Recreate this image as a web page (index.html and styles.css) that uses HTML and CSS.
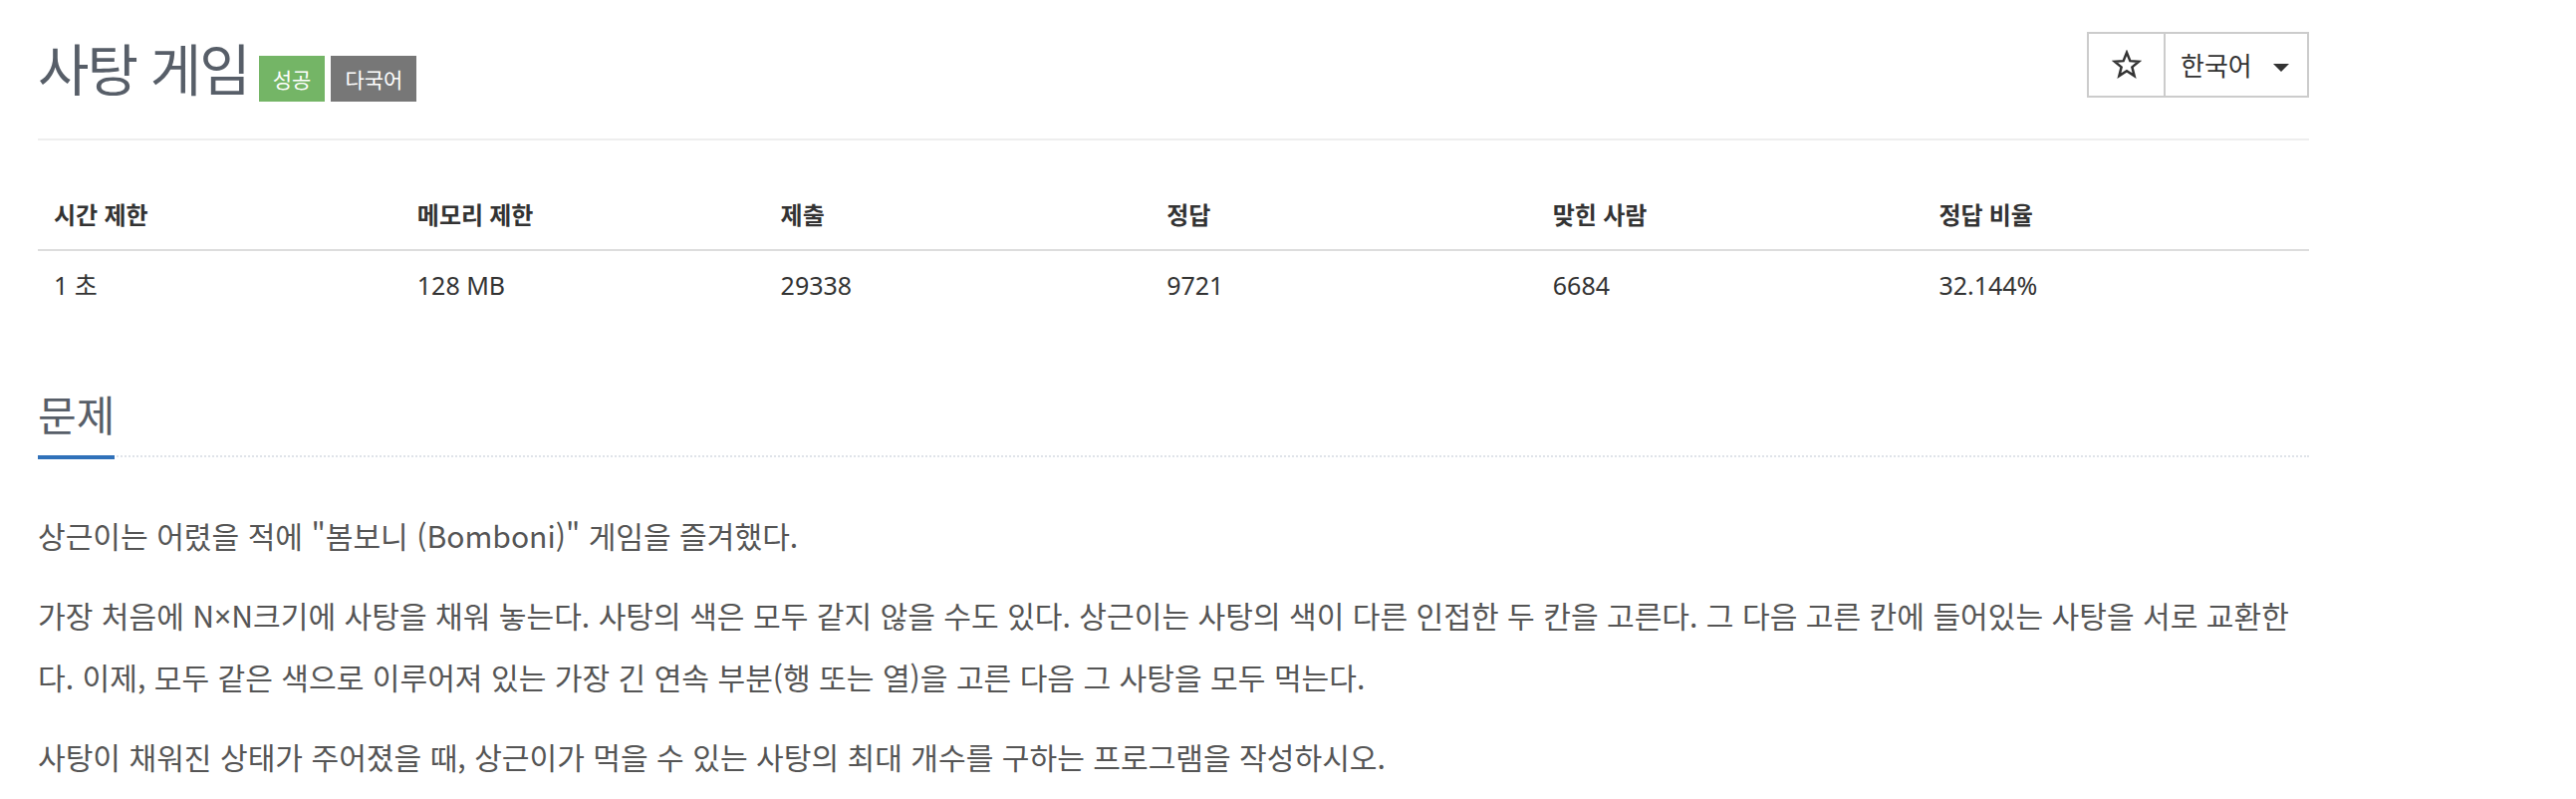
FILE: index.html
```html
<!DOCTYPE html>
<html lang="ko">
<head>
<meta charset="utf-8">
<title>사탕 게임</title>
<link rel="stylesheet" href="styles.css">
</head>
<body>
<div class="page">
  <div class="title-row">
    <h1 class="title">
      <span class="title-text">사탕 게임</span>
      <span class="label label-success">성공</span>
      <span class="label label-default">다국어</span>
    </h1>
    <div class="btn-group">
      <button class="btn btn-star" type="button">
        <svg class="star" viewBox="0 0 24 24" width="30" height="30"><polygon points="12,2.2 14.7,8.9 21.8,9.4 16.3,13.9 18.1,20.9 12,17 5.9,20.9 7.7,13.9 2.2,9.4 9.3,8.9" fill="none" stroke="#333" stroke-width="2" stroke-linejoin="miter"/></svg>
      </button>
      <button class="btn btn-lang" type="button"><span class="lang-text">한국어</span><span class="caret"></span></button>
    </div>
  </div>
  <hr class="divider">
  <table class="info-table">
    <thead>
      <tr>
        <th class="w16">시간 제한</th>
        <th class="w16">메모리 제한</th>
        <th class="w17">제출</th>
        <th class="w17">정답</th>
        <th class="w17">맞힌 사람</th>
        <th class="w17">정답 비율</th>
      </tr>
    </thead>
    <tbody>
      <tr>
        <td>1 초</td>
        <td>128 MB</td>
        <td>29338</td>
        <td>9721</td>
        <td>6684</td>
        <td>32.144%</td>
      </tr>
    </tbody>
  </table>
  <section class="problem-section">
    <div class="headline"><h2>문제</h2></div>
    <div class="problem-text">
      <p>상근이는 어렸을 적에 "봄보니 (Bomboni)" 게임을 즐겨했다.</p>
      <p>가장 처음에 N<span class="latin">×</span>N크기에 사탕을 채워 놓는다. 사탕의 색은 모두 같지 않을 수도 있다. 상근이는 사탕의 색이 다른 인접한 두 칸을 고른다. 그 다음 고른 칸에 들어있는 사탕을 서로 교환한다. 이제, 모두 같은 색으로 이루어져 있는 가장 긴 연속 부분(행 또는 열)을 고른 다음 그 사탕을 모두 먹는다.</p>
      <p>사탕이 채워진 상태가 주어졌을 때, 상근이가 먹을 수 있는 사탕의 최대 개수를 구하는 프로그램을 작성하시오.</p>
    </div>
  </section>
</div>
</body>
</html>
```
FILE: styles.css
```css
html, body {
  margin: 0;
  padding: 0;
  background: #fff;
}
body {
  font-family: "Noto Sans", "Noto Sans CJK KR", sans-serif;
  color: #555;
}
.page {
  width: 2280px;
  padding: 0 0 0 38px;
}
.title-row {
  display: flex;
  justify-content: space-between;
  align-items: flex-start;
  padding-top: 32px;
}
.title {
  display: flex;
  align-items: flex-start;
  margin: 0;
  font-weight: 400;
}
.title-text {
  font-family: "Noto Sans CJK KR", "Noto Sans", sans-serif;
  font-size: 56px;
  line-height: 70px;
  letter-spacing: -2px;
  color: #575e68;
}
.label {
  display: inline-block;
  margin-top: 24px;
  height: 46px;
  line-height: 46px;
  padding: 0 14px;
  font-family: "Noto Sans CJK KR", "Noto Sans", sans-serif;
  font-size: 21px;
  color: #fff;
}
.label-success {
  background: #74b566;
  margin-left: 10px;
}
.label-default {
  background: #777;
  margin-left: 6px;
}
.btn-group {
  display: flex;
}
.btn {
  height: 66px;
  margin: 0;
  background: #fff;
  border: 2px solid #ccc;
  color: #333;
  font-family: "Noto Sans CJK KR", "Noto Sans", sans-serif;
  display: flex;
  align-items: center;
  cursor: pointer;
}
.btn-star {
  width: 79px;
  justify-content: center;
  padding: 0;
}
.star {
  display: block;
}
.btn-lang {
  width: 144px;
  border-left: 0;
  padding: 0 0 0 15px;
}
.lang-text {
  font-size: 26px;
  line-height: 30px;
}
.caret {
  display: inline-block;
  width: 0;
  height: 0;
  margin-left: 21px;
  margin-top: 6px;
  border-top: 8px solid #333;
  border-left: 8px solid transparent;
  border-right: 8px solid transparent;
}
.divider {
  border: 0;
  height: 2px;
  background: #eee;
  margin: 37px 0 40px;
}
.info-table {
  width: 100%;
  border-collapse: collapse;
  color: #333;
}
.info-table th {
  text-align: left;
  font-weight: 700;
  font-size: 24px;
  line-height: 37px;
  padding: 16px;
  border-bottom: 2px solid #ddd;
}
.info-table td {
  font-size: 25px;
  line-height: 37px;
  padding: 16px;
}
.w16 { width: 16%; }
.w17 { width: 17%; }
.problem-section {
  margin-top: 69px;
}
.headline {
  display: flex;
  border-bottom: 2px dotted #dfe3e9;
  margin-bottom: 48px;
}
.headline h2 {
  margin: 0 0 -4px 0;
  font-family: "Noto Sans CJK KR", "Noto Sans", sans-serif;
  font-size: 42px;
  font-weight: 400;
  line-height: 50px;
  padding-bottom: 17px;
  border-bottom: 4px solid #3071b9;
  color: #575e68;
}
.problem-text p {
  margin: 0 0 20px;
  font-family: "Noto Sans CJK KR", "Noto Sans", sans-serif;
  font-size: 30.1px;
  line-height: 60px;
  color: #555;
}
.latin {
  font-family: "Noto Sans", sans-serif;
}
```
